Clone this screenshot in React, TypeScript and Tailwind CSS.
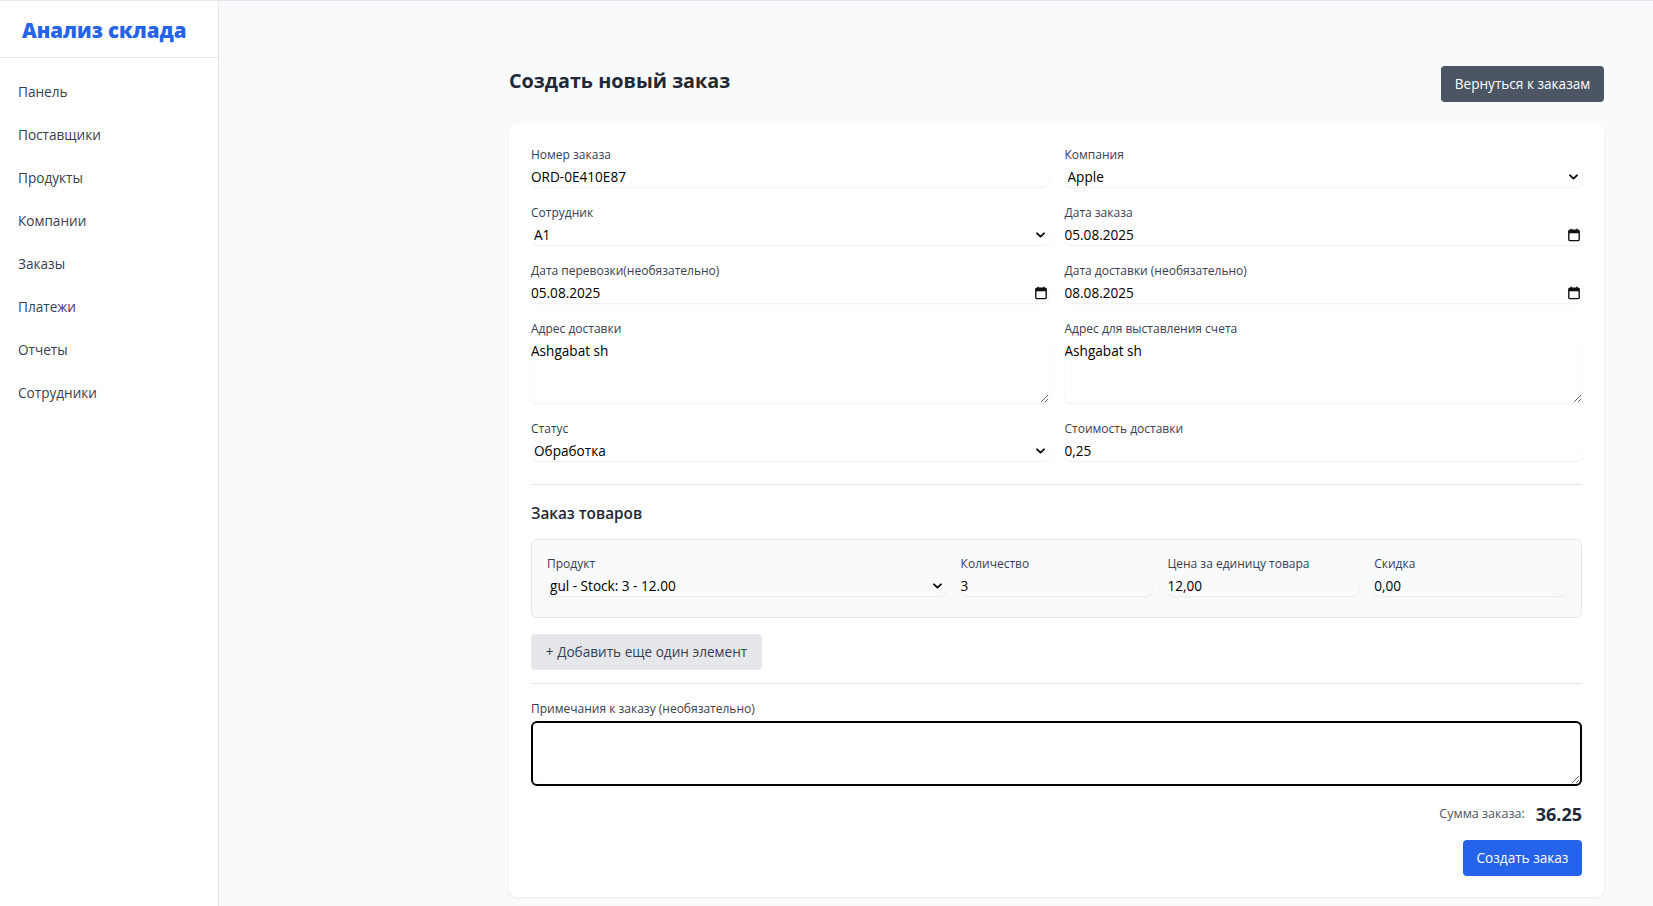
import { ReactNode } from "react";

const navItems = [
  "Панель",
  "Поставщики",
  "Продукты",
  "Компании",
  "Заказы",
  "Платежи",
  "Отчеты",
  "Сотрудники",
];

const labelClass = "block text-[12px] leading-[17px] font-medium text-[#374151]";
const inputClass =
  "mt-[3px] block h-[21px] w-full rounded-md bg-transparent text-[13.6px] leading-[21px] text-black shadow-[0_1px_2px_0_rgba(0,0,0,0.07)] outline-none";
const textareaClass =
  "mt-[3px] block h-[63px] w-full resize-y rounded-md bg-transparent pt-[1px] text-[13.6px] leading-[20.4px] text-black shadow-[0_1px_2px_0_rgba(0,0,0,0.07)] outline-none";

function Chevron() {
  return (
    <svg
      viewBox="0 0 10 6"
      className="pointer-events-none absolute right-[4px] top-1/2 h-[6px] w-[9px] -translate-y-1/2"
      fill="none"
      stroke="#111"
      strokeWidth="2.2"
      strokeLinecap="round"
      strokeLinejoin="round"
    >
      <path d="M1.2 1.2 5 4.8 8.8 1.2" />
    </svg>
  );
}

function CalendarIcon() {
  return (
    <svg
      viewBox="0 0 12 13"
      className="pointer-events-none absolute right-[2px] top-1/2 h-[13px] w-[12px] -translate-y-1/2"
    >
      <rect x="0.8" y="1.8" width="10.4" height="10.4" rx="1.2" fill="none" stroke="#111" strokeWidth="1.4" />
      <rect x="0.8" y="1.8" width="10.4" height="3" fill="#111" />
      <rect x="2.6" y="0" width="1.4" height="2.6" fill="#111" />
      <rect x="8" y="0" width="1.4" height="2.6" fill="#111" />
    </svg>
  );
}

function Field({ label, children }: { label: string; children: ReactNode }) {
  return (
    <div>
      <label className={labelClass}>{label}</label>
      {children}
    </div>
  );
}

function TextInput({ value }: { value: string }) {
  return <input type="text" defaultValue={value} className={inputClass} />;
}

function SelectInput({ value }: { value: string }) {
  return (
    <div className="relative">
      <select defaultValue={value} className={`${inputClass} appearance-none pl-[3px]`}>
        <option value={value}>{value}</option>
      </select>
      <Chevron />
    </div>
  );
}

function DateInput({ value }: { value: string }) {
  return (
    <div className="relative">
      <input type="text" defaultValue={value} className={inputClass} />
      <CalendarIcon />
    </div>
  );
}

export default function App() {
  return (
    <div className="flex min-h-screen border-t border-[#e5e7eb] bg-[#f9fafb] font-['Open_Sans','Noto_Sans',sans-serif]">
      {/* Sidebar */}
      <aside className="w-[219px] shrink-0 border-r border-[#e5e7eb] bg-white">
        <div className="flex h-[57px] items-center border-b border-[#e5e7eb] px-[22px] pt-[2px]">
          <h1 className="text-[20.4px] leading-[30px] font-extrabold text-[#2563eb]">Анализ склада</h1>
        </div>
        <nav className="pt-[13px]">
          {navItems.map((item) => (
            <a
              key={item}
              href="#"
              className="flex h-[43px] items-center px-[18px] text-[13.6px] text-[#374151]"
            >
              {item}
            </a>
          ))}
        </nav>
      </aside>

      {/* Main */}
      <main className="flex-1 pl-[290px] pr-[49px] pt-[65px]">
        <div className="flex items-center justify-between">
          <h2 className="mb-[6px] text-[19.8px] leading-[28px] font-bold text-[#1f2937]">Создать новый заказ</h2>
          <button className="h-[36px] w-[163px] rounded bg-[#4b5563] text-[13.6px] text-white">
            Вернуться к заказам
          </button>
        </div>

        <form className="mt-[21px] rounded-lg bg-white px-[22px] pt-[23px] pb-[21px] shadow-[0_1px_3px_0_rgba(0,0,0,0.06)]">
          <div className="grid grid-cols-2 gap-x-[16px] gap-y-[17px]">
            <Field label="Номер заказа">
              <TextInput value="ORD-0E410E87" />
            </Field>
            <Field label="Компания">
              <SelectInput value="Apple" />
            </Field>
            <Field label="Сотрудник">
              <SelectInput value="A1" />
            </Field>
            <Field label="Дата заказа">
              <DateInput value="05.08.2025" />
            </Field>
            <Field label="Дата перевозки(необязательно)">
              <DateInput value="05.08.2025" />
            </Field>
            <Field label="Дата доставки (необязательно)">
              <DateInput value="08.08.2025" />
            </Field>
            <Field label="Адрес доставки">
              <textarea rows={3} defaultValue="Ashgabat sh" className={textareaClass} />
            </Field>
            <Field label="Адрес для выставления счета">
              <textarea rows={3} defaultValue="Ashgabat sh" className={textareaClass} />
            </Field>
            <Field label="Статус">
              <SelectInput value="Обработка" />
            </Field>
            <Field label="Стоимость доставки">
              <TextInput value="0,25" />
            </Field>
          </div>

          {/* Order items */}
          <div className="mt-[23px] border-t border-[#e5e7eb] pt-[16px]">
            <h3 className="text-[15.3px] leading-[24px] font-semibold text-[#1f2937]">Заказ товаров</h3>
            <div className="mt-[14px] rounded-md border border-[#e5e7eb] bg-[#f9fafb] px-[15px] pt-[15px] pb-[21px]">
              <div className="grid grid-cols-5 gap-x-[15px]">
                <div className="col-span-2">
                  <Field label="Продукт">
                    <SelectInput value="gul - Stock: 3 - 12.00" />
                  </Field>
                </div>
                <Field label="Количество">
                  <TextInput value="3" />
                </Field>
                <Field label="Цена за единицу товара">
                  <TextInput value="12,00" />
                </Field>
                <Field label="Скидка">
                  <TextInput value="0,00" />
                </Field>
              </div>
            </div>
            <button
              type="button"
              className="mt-[16px] h-[36px] w-[231px] rounded bg-[#e5e7eb] text-[13.6px] text-[#374151]"
            >
              + Добавить еще один элемент
            </button>
          </div>

          {/* Notes */}
          <div className="mt-[13px] border-t border-[#e5e7eb] pt-[16px]">
            <label className={labelClass}>Примечания к заказу (необязательно)</label>
            <textarea
              rows={3}
              className="mt-[4px] block h-[65px] w-full resize-y rounded-md border-2 border-black bg-transparent text-[13.6px] outline-none"
            />
          </div>

          <div className="mt-[16px] flex items-center justify-end gap-[11px]">
            <span className="text-[12.5px] text-[#4b5563]">Сумма заказа:</span>
            <span className="text-[18px] leading-[24px] font-bold text-[#1f2937]">36.25</span>
          </div>

          <div className="mt-[14px] flex justify-end">
            <button type="submit" className="h-[36px] w-[119px] rounded bg-[#2563eb] text-[13.6px] text-white">
              Создать заказ
            </button>
          </div>
        </form>
      </main>
    </div>
  );
}
